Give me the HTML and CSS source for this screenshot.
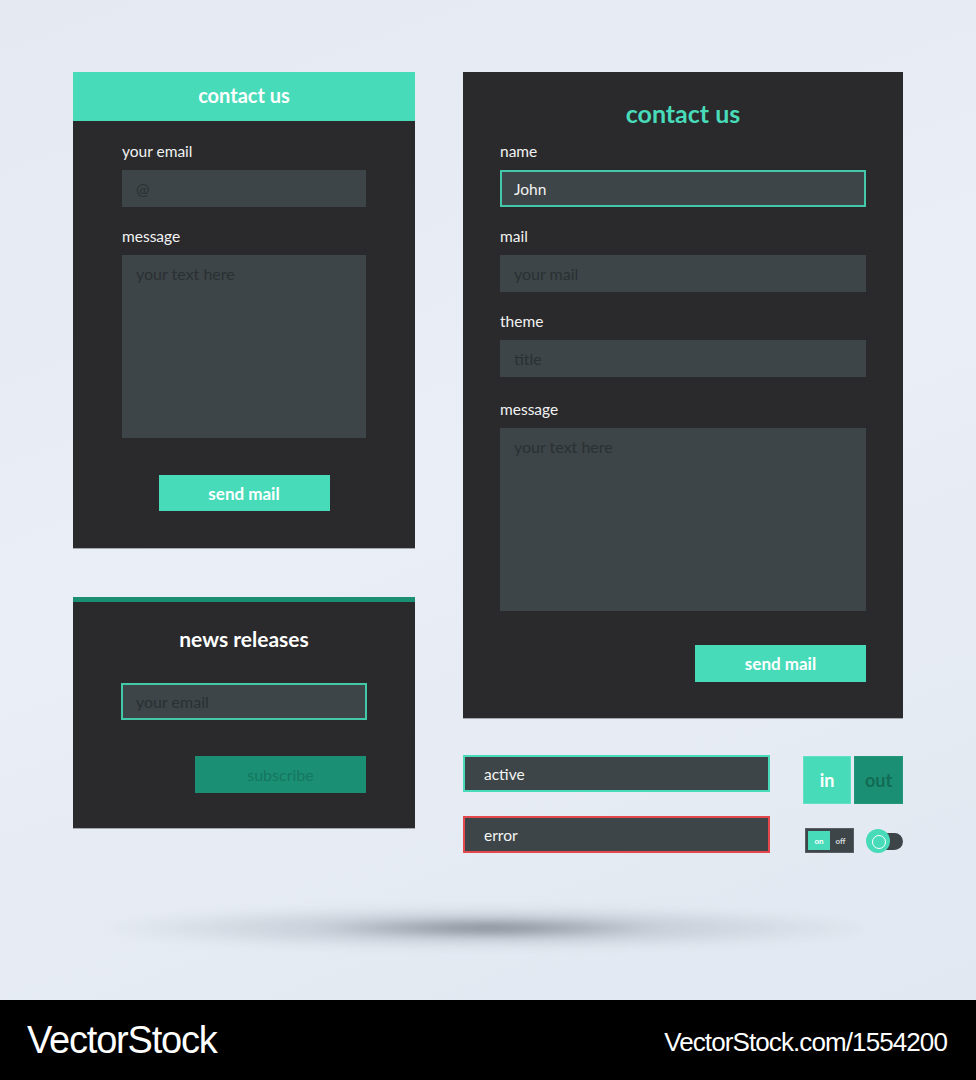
FILE: index.html
```
<!DOCTYPE html>
<html lang="en">
<head>
    <meta charset="UTF-8">
    <meta name="viewport" content="width=device-width, initial-scale=1.0">
    <title>Contact Forms Kit</title>
    <link rel="stylesheet" href="styles.css">
</head>
<body>
<div class="stage">
    <div class="layout">
        <!-- Left column: small contact form + newsletter -->
        <div class="col-left">
            <form class="card card-small">
                <div class="card-head">contact us</div>
                <div class="card-body">
                    <label class="field-label">your email</label>
                    <input class="field" type="text" placeholder="@">
                    <label class="field-label">message</label>
                    <textarea class="field field-area" placeholder="your text here"></textarea>
                    <div class="actions center">
                        <button type="button" class="btn">send mail</button>
                    </div>
                </div>
            </form>

            <form class="card card-news">
                <h2 class="news-title">news releases</h2>
                <input class="field field-focus" type="text" placeholder="your email">
                <div class="actions right">
                    <button type="button" class="btn btn-dark">subscribe</button>
                </div>
            </form>
        </div>

        <!-- Right column: full contact form + widgets -->
        <div class="col-right">
            <form class="card card-large">
                <h2 class="large-title">contact us</h2>
                <label class="field-label">name</label>
                <input class="field field-focus" type="text" value="John">
                <label class="field-label">mail</label>
                <input class="field" type="text" placeholder="your mail">
                <label class="field-label">theme</label>
                <input class="field" type="text" placeholder="title">
                <label class="field-label label-gap">message</label>
                <textarea class="field field-area" placeholder="your text here"></textarea>
                <div class="actions right">
                    <button type="button" class="btn">send mail</button>
                </div>
            </form>

            <div class="widgets">
                <div class="states">
                    <input class="field state state-active" type="text" value="active">
                    <input class="field state state-error" type="text" value="error">
                </div>
                <div class="controls">
                    <div class="inout">
                        <span class="io io-in">in</span>
                        <span class="io io-out">out</span>
                    </div>
                    <div class="toggles">
                        <div class="switch">
                            <span class="switch-on">on</span>
                            <span class="switch-off">off</span>
                        </div>
                        <div class="slider">
                            <span class="slider-knob"></span>
                        </div>
                    </div>
                </div>
            </div>
        </div>
    </div>
    <div class="floor-shadow"></div>
</div>
<footer class="footer">
    <span class="brand">VectorStock</span>
    <span class="brand-url">VectorStock.com/1554200</span>
</footer>
</body>
</html>
```

FILE: styles.css
```
* {
    box-sizing: border-box;
}

body {
    margin: 0;
    height: 1080px;
    display: flex;
    flex-direction: column;
    font-family: Lato, "Open Sans", sans-serif;
    background: linear-gradient(160deg, #e4e9f2 0%, #eaeef6 45%, #e0e7f0 100%);
    color: #f0f0f0;
    overflow: hidden;
}

.stage {
    flex: 1;
    padding: 72px 0 0 73px;
}

.layout {
    display: flex;
    gap: 48px;
    align-items: flex-start;
}

.col-left {
    width: 342px;
    display: flex;
    flex-direction: column;
    gap: 49px;
}

.col-right {
    width: 440px;
}

/* cards */
.card {
    background-color: #2a2a2c;
    box-shadow: 0 1px 0 rgba(40, 42, 46, 0.35);
    margin: 0;
}

.card-head {
    height: 49px;
    background-color: #48dbb9;
    color: #fff;
    font-weight: 700;
    font-size: 20px;
    text-align: center;
    line-height: 47px;
}

.card-body {
    padding: 21px 49px 37px;
}

.card-small .card-body {
    display: flex;
    flex-direction: column;
}

.field-label {
    display: block;
    font-size: 15.5px;
    line-height: 18px;
    margin-bottom: 10px;
    color: #f2f2f2;
}

.field {
    display: block;
    width: 100%;
    height: 37px;
    margin: 0 0 20px;
    padding: 0 14px;
    border: none;
    outline: none;
    background-color: #3d4548;
    color: #f2f2f2;
    font-family: Lato, "Open Sans", sans-serif;
    font-size: 15.5px;
}

.field::placeholder {
    color: #2b3033;
    font-size: 16px;
}

.field-area {
    height: 183px;
    padding: 9px 14px;
    resize: none;
    margin-bottom: 0;
}

.field-focus {
    border: 2px solid #43c9a9;
    padding: 0 12px;
}

.actions {
    display: flex;
}

.actions.center {
    justify-content: center;
    margin-top: 37px;
}

.actions.right {
    justify-content: flex-end;
}

.btn {
    width: 171px;
    height: 36px;
    border: none;
    background-color: #48dbb9;
    color: #fff;
    font-family: Lato, "Open Sans", sans-serif;
    font-weight: 700;
    font-size: 17px;
    cursor: pointer;
}

.btn-dark {
    background-color: #1b8f73;
    color: #157760;
    font-weight: 400;
    font-size: 16px;
    height: 37px;
}

/* newsletter card */
.card-news {
    height: 231px;
    border-top: 5px solid #1b8f73;
    padding: 25px 48px 0;
}

.news-title {
    margin: 0 0 32px;
    font-size: 21px;
    line-height: 24px;
    font-weight: 700;
    text-align: center;
    color: #fff;
}

.card-news .field {
    margin-bottom: 36px;
    padding-left: 13px;
}

.card-news .btn {
    margin-right: 1px;
}

/* large contact card */
.card-large {
    height: 646px;
    padding: 27px 37px 0;
}

.large-title {
    margin: 0 0 15px;
    font-size: 25px;
    line-height: 28px;
    font-weight: 700;
    text-align: center;
    color: #48dbb9;
}

.card-large .label-gap {
    padding-top: 3px;
}

.card-large .actions {
    margin-top: 34px;
}

.card-large .btn {
    height: 37px;
}

/* states and small controls */
.widgets {
    display: flex;
    justify-content: space-between;
    margin-top: 37px;
}

.states {
    width: 307px;
}

.state {
    padding: 0 19px;
    margin-bottom: 24px;
    color: #f5f5f5;
}

.state-active {
    border: 2px solid #48dbb9;
}

.state-error {
    border: 2px solid #e4484c;
}

.controls {
    width: 100px;
    display: flex;
    flex-direction: column;
    gap: 24px;
    padding-top: 1px;
}

.inout {
    display: flex;
    gap: 3px;
}

.io {
    height: 48px;
    display: flex;
    align-items: center;
    justify-content: center;
    font-weight: 700;
    font-size: 18px;
}

.io-in {
    width: 48px;
    background-color: #48dbb9;
    border: 1px solid #62e2c4;
    color: #fff;
}

.io-out {
    width: 49px;
    background-color: #1b8f73;
    border: 1px solid #24977b;
    color: #126b54;
}

.toggles {
    display: flex;
    align-items: center;
    justify-content: space-between;
    padding-left: 2px;
}

.switch {
    width: 49px;
    height: 25px;
    padding: 2px;
    display: flex;
    align-items: stretch;
    background-color: #3d4548;
    border: 1px solid #585e63;
    font-size: 8px;
    font-weight: 700;
}

.switch-on {
    width: 22px;
    background-color: #48dbb9;
    color: #fff;
    display: flex;
    align-items: center;
    justify-content: center;
}

.switch-off {
    flex: 1;
    color: #d6dadc;
    display: flex;
    align-items: center;
    justify-content: center;
}

.slider {
    position: relative;
    width: 37px;
    height: 24px;
    display: flex;
    align-items: center;
}

.slider::before {
    content: "";
    position: absolute;
    left: 6px;
    right: 0;
    top: 4px;
    height: 17px;
    border-radius: 9px;
    background-color: #3d4548;
}

.slider-knob {
    position: relative;
    width: 24px;
    height: 24px;
    border-radius: 50%;
    background-color: #48dbb9;
}

.slider-knob::after {
    content: "";
    position: absolute;
    left: 6px;
    top: 6px;
    width: 12px;
    height: 12px;
    border-radius: 50%;
    border: 1.5px solid #fff;
}

/* soft floor shadow under the kit */
.floor-shadow {
    width: 780px;
    height: 56px;
    margin: 23px 0 0 25px;
    background: radial-gradient(ellipse 50% 40% at 50% 50%, rgba(100, 108, 118, 0.8) 0%, rgba(150, 160, 170, 0.35) 45%, rgba(200, 208, 218, 0) 100%);
    filter: blur(4px);
}

/* footer bar */
.footer {
    height: 80px;
    background-color: #000;
    display: flex;
    align-items: center;
    justify-content: space-between;
    padding: 0 29px 0 27px;
    font-family: "Liberation Sans", Arial, sans-serif;
    color: #fff;
}

.brand {
    font-size: 38px;
    letter-spacing: -1.2px;
}

.brand-url {
    font-size: 26px;
    letter-spacing: -0.9px;
    padding-top: 4px;
}
```
